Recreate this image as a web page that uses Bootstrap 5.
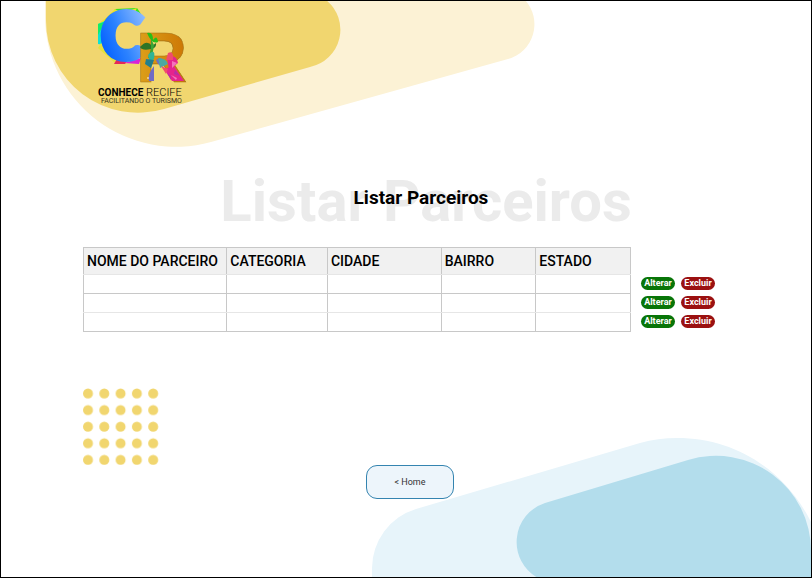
<!DOCTYPE html>
<html lang="pt-BR">
<head>
<meta charset="utf-8">
<meta name="viewport" content="width=device-width, initial-scale=1">
<title>Listar Parceiros</title>
<link href="https://cdn.jsdelivr.net/npm/bootstrap@5.3.0/dist/css/bootstrap.min.css" rel="stylesheet">
<style>
  body { font-family: Roboto, sans-serif; color: #000; background: #fff; }
  .page { border: 1px solid #000; isolation: isolate; }
  .blob { position: absolute; z-index: -1; pointer-events: none; }
  .blob-top { top: 0; left: 0; }
  .blob-bottom { right: 0; bottom: 0; }
  .brand-link { margin: 6px 0 0 96px; }
  .brand-link svg { overflow: visible; }
  .content { padding: 0 96px 0 82px; }
  .title-stack { display: grid; place-items: center; margin-top: 43px; padding-left: 54px; }
  .title-stack > * { grid-area: 1 / 1; margin: 0; white-space: nowrap; line-height: 92px; }
  .title-ghost { padding-top: 7px; font-size: 58px; font-weight: 700; color: #ebebeb; }
  .title-front { font-size: 19px; font-weight: 700; padding-right: 10px; }
  .partners { table-layout: fixed; border: 1px solid #c4c4c4; color: #000; }
  .partners th { height: 27px; padding: 0 3px; font-size: 14px; line-height: 24px; font-weight: 500; background: #f1f1f1; white-space: nowrap; }
  .partners td { height: 19px; padding: 0; }
  .partners th, .partners td { border: 1px solid #c8c8c8; }
  .partners thead th, .partners tbody tr:nth-child(2) td { border-bottom-color: #e6e6e6; }
  .partners tbody tr:first-child td, .partners tbody tr:last-child td { border-top-color: #e6e6e6; }
  .actions { display: grid; gap: 6px; padding-top: 30px; margin-left: 10px; }
  .action-row { gap: 6px; }
  .pill { width: 34px; height: 13px; padding: 0; border: 0; border-radius: 7px; font-size: 9px; line-height: 13px; font-weight: 700; color: #fff; }
  .pill-edit, .pill-edit:hover { background: #087508; color: #fff; }
  .pill-delete, .pill-delete:hover { background: #9b1111; color: #fff; }
  .dots { margin-top: 56px; }
  .home { width: 88px; height: 34px; padding: 0; border: 1px solid #3484b0; border-radius: 11px; background: #edf5fb; color: #333; font-size: 9px; line-height: 32px; }
</style>
</head>
<body>
<div class="page position-relative overflow-hidden min-vh-100">
  <svg class="blob blob-top" width="540" height="150" aria-hidden="true">
    <path fill="#fcf2d5" d="M44 -1V16A131 131 0 0 0 210 141L507 58A36 36 0 0 0 524 -1Z"/>
    <path fill="#f1d66f" d="M45 -1V19A92 92 0 0 0 163 108L309 66A38 38 0 0 0 325 -1Z"/>
  </svg>
  <svg class="blob blob-bottom" width="440" height="140" viewBox="371 437 440 140" aria-hidden="true">
    <path fill="#e7f4fa" d="M372 578V568A62 62 0 0 1 416 509L640 443Q658 438 677 438C735 438 785 470 811 522V578Z"/>
    <path fill="#b3ddec" d="M538 578A41 41 0 0 1 545 503L688 460A95 95 0 0 1 811 551V578Z"/>
  </svg>

  <header class="d-flex">
    <a class="brand-link" href="#" aria-label="Conhece Recife">
      <svg class="d-block" width="94" height="98" viewBox="97 7 94 98">
        <defs>
          <linearGradient id="blue" gradientUnits="userSpaceOnUse" x1="100" y1="42" x2="148" y2="22"><stop offset="0" stop-color="#0562ff"/><stop offset=".4" stop-color="#2c82ff"/><stop offset="1" stop-color="#91bdff"/></linearGradient>
          <linearGradient id="amber" x1="0" y1="0" x2="1" y2="0"><stop offset="0" stop-color="#dda21b"/><stop offset="1" stop-color="#cc7504"/></linearGradient>
        </defs>
        <path fill="#32e51e" d="M115 9L137 8L141 14L110 22Z"/>
        <path fill="#f2e51e" d="M115 9L107 17L98 24L109 22L120 12ZM125 12L137 8L134 14Z"/>
        <path fill="#0ce0d4" d="M98 24L107 20L104 45L98 44Z"/>
        <path fill="#10ec68" d="M98 24L105 22L98 35Z"/>
        <path fill="#e4e13c" d="M101 43L98 48L115 63L117 57Z"/>
        <path fill="#e52958" d="M114 64L118 57L128 60L125 64Z"/>
        <path fill="#d823d8" d="M124 63L141 58L139 64Z"/>
        <text x="101" y="59" font-family="Lato, sans-serif" font-size="64" font-weight="900" fill="url(#blue)" stroke="url(#blue)" stroke-width="5">C</text>
        <text x="136" y="82" font-family="Liberation Sans, sans-serif" font-size="71" font-weight="700" fill="url(#amber)" stroke="#a57317" stroke-width=".6">R</text>
        <path fill="#27bf18" d="M147 33Q153 31 153 40Q157 34 158 42Q152 45 147 33Z"/>
        <path fill="#2d7426" d="M140 47Q147 39 152 46L156 43Q157 48 151 49Q142 51 140 47Z"/>
        <path fill="#39a635" d="M151 39L154 45L152 57L148 58L151 49Z"/>
        <path fill="#30b497" d="M148 55Q156 47 154 59L150 62Z"/>
        <path fill="#227f8d" d="M146 59L154 60L151 68L145 64Z"/>
        <path fill="#716cc4" d="M154 66Q147 75 149 81H154ZM156 60Q163 55 164 65Q159 68 156 60Z"/>
        <path fill="#4aa9a2" d="M158 58Q166 58 168 64L160 68Z"/>
        <path fill="#e5248d" d="M167 58Q176 53 178 63L169 70ZM164 69L174 66L184 81H172Z"/>
        <path fill="#f04c6d" d="M168 53Q174 50 173 60L166 60ZM161 66L168 69L166 74Z"/>
        <path fill="#b72fa5" d="M167 73L171 76L171 80ZM175 70L180 76L174 74Z"/>
        <path fill="#f473bd" d="M172 61L177 63L172 68ZM171 75L177 78L176 80Z"/>
        <circle cx="148" cy="78" r="1" fill="#f4db9b"/>
        <text x="98" y="96" font-family="Roboto, sans-serif"><tspan font-size="10" font-weight="700">CONHECE</tspan><tspan font-size="11" font-weight="300"> RECIFE</tspan></text>
        <text x="101" y="103" font-family="Roboto, sans-serif" font-size="7" fill="#33301b">FACILITANDO O TURISMO</text>
      </svg>
    </a>
  </header>

  <main class="content">
    <div class="title-stack">
      <div class="title-ghost" aria-hidden="true">Listar Parceiros</div>
      <h1 class="title-front">Listar Parceiros</h1>
    </div>

    <div class="d-flex align-items-start">
      <div class="flex-grow-1">
        <table class="partners w-100">
          <colgroup><col style="width:26.2%"><col style="width:18.4%"><col style="width:20.8%"><col style="width:17.3%"><col style="width:17.3%"></colgroup>
          <thead>
            <tr><th scope="col">NOME DO PARCEIRO</th><th scope="col">CATEGORIA</th><th scope="col">CIDADE</th><th scope="col">BAIRRO</th><th scope="col">ESTADO</th></tr>
          </thead>
          <tbody>
            <tr><td></td><td></td><td></td><td></td><td></td></tr>
            <tr><td></td><td></td><td></td><td></td><td></td></tr>
            <tr><td></td><td></td><td></td><td></td><td></td></tr>
          </tbody>
        </table>
      </div>
      <div class="actions">
        <div class="d-flex action-row"><button type="button" class="btn pill pill-edit">Alterar</button><button type="button" class="btn pill pill-delete">Excluir</button></div>
        <div class="d-flex action-row"><button type="button" class="btn pill pill-edit">Alterar</button><button type="button" class="btn pill pill-delete">Excluir</button></div>
        <div class="d-flex action-row"><button type="button" class="btn pill pill-edit">Alterar</button><button type="button" class="btn pill pill-delete">Excluir</button></div>
      </div>
    </div>

    <svg class="dots d-block" width="76" height="77" aria-hidden="true">
      <defs><pattern id="dot" width="16.3" height="16.6" patternUnits="userSpaceOnUse"><circle cx="5" cy="5.5" r="5" fill="#f1d66f"/></pattern></defs>
      <rect width="76" height="78" fill="url(#dot)"/>
    </svg>
  </main>

  <footer class="text-center ps-2">
    <a class="btn home" href="#">&lt; Home</a>
  </footer>
</div>
<script src="https://cdn.jsdelivr.net/npm/bootstrap@5.3.0/dist/js/bootstrap.bundle.min.js"></script>
</body>
</html>
